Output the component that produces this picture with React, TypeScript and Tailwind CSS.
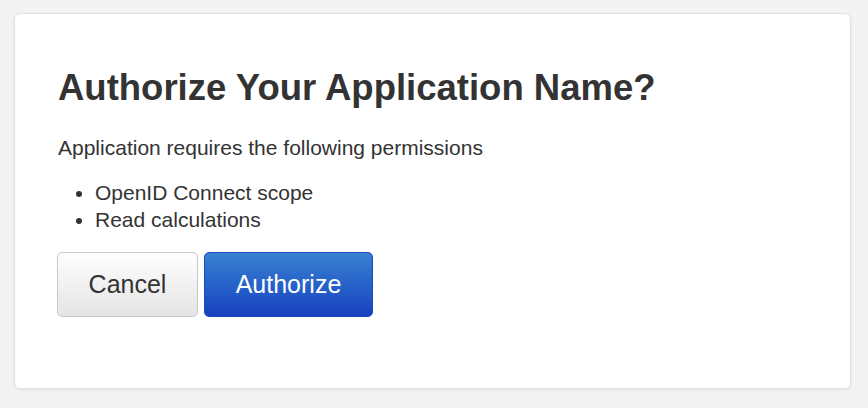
export default function App() {
  return (
    <div className="min-h-[408px] bg-[#f3f3f3] pt-[13px] pl-[14px] pr-[17px] pb-[19px] font-['Liberation_Sans',Arial,sans-serif] text-[#333]">
      <div className="h-[376px] rounded-[6px] border border-[#e2e2e2] bg-white px-[43px] pt-[54px] shadow-[0_1px_3px_rgba(0,0,0,0.08)]">
        <h1 className="text-[36.5px] font-bold leading-[40px]">Authorize Your Application Name?</h1>
        <p className="mt-[26px] text-[21px] leading-[28px]">Application requires the following permissions</p>
        <ul className="mt-[17px] list-disc pl-[37px] text-[21px] leading-[27px]">
          <li>OpenID Connect scope</li>
          <li>Read calculations</li>
        </ul>
        <div className="-ml-px mt-[19px] flex gap-[6px]">
          <button className="h-[65px] w-[141px] rounded-[5px] border border-[#c8c8c8] bg-gradient-to-b from-[#fefefe] to-[#e4e4e4] text-[25px] text-[#333]">
            Cancel
          </button>
          <button className="h-[65px] w-[169px] rounded-[5px] border border-[#1d49b8] bg-gradient-to-b from-[#3a80d1] to-[#1a40c0] text-[25px] text-white">
            Authorize
          </button>
        </div>
      </div>
    </div>
  );
}
